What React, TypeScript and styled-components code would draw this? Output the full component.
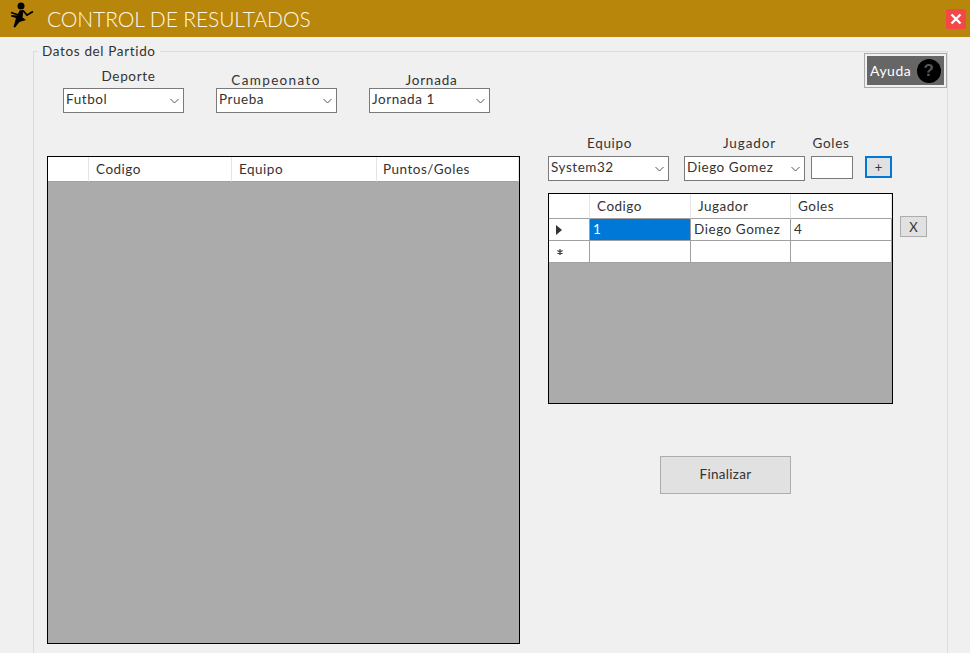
import React from 'react';
import styled, { createGlobalStyle } from 'styled-components';

const Global = createGlobalStyle`
  html, body {
    margin: 0;
    padding: 0;
    background: #f0f0f0;
  }
  body {
    font-family: "Lato", "Noto Sans", sans-serif;
    color: #333;
  }
`;

const Page = styled.div`
  width: 970px;
  height: 653px;
  overflow: hidden;
  background: #f0f0f0;
`;

const TitleBar = styled.header`
  height: 37px;
  background: #b8860b;
  display: flex;
  align-items: center;
  padding: 0 4px 0 9px;
`;

const Logo = styled.svg`
  width: 26px;
  height: 28px;
  margin-top: -9px;
`;

const Title = styled.h1`
  flex: 1;
  margin: 0 0 0 12px;
  color: #fff8e6;
  font-size: 21px;
  font-weight: 300;
  letter-spacing: -0.1px;
`;

const Close = styled.button`
  width: 20px;
  height: 20px;
  padding: 0;
  border: none;
  border-radius: 2px;
  background: #f44747;
  display: flex;
  align-items: center;
  justify-content: center;
  margin-top: 1px;
`;

const Main = styled.main`
  padding: 6px 22px 0 33px;
  position: relative;
`;

const Group = styled.fieldset`
  margin: 0;
  height: 640px;
  padding: 0 14px 0 13px;
  border: 1px solid #dcdcdc;
  box-sizing: border-box;
`;

const GroupTitle = styled.legend`
  margin-left: -9px;
  padding: 0 4px;
  font-size: 13.5px;
  line-height: 16px;
  letter-spacing: 0.65px;
`;

const HelpButton = styled.button`
  position: absolute;
  top: 16px;
  right: 23px;
  width: 83px;
  height: 35px;
  padding: 0 3px 0 5px;
  background: #666;
  border: 1px solid #a9a9a9;
  outline: 2px solid #f0f0f0;
  outline-offset: -3px;
  color: #fff;
  display: flex;
  align-items: center;
  justify-content: space-between;
  font: 400 14px "Lato", sans-serif;
  letter-spacing: 0.5px;
`;

const HelpMark = styled.span`
  width: 24px;
  height: 24px;
  margin-right: 2px;
  border-radius: 50%;
  background: #000;
  color: #555;
  font: 700 17px/24px "Liberation Sans", sans-serif;
  text-align: center;
`;

const Columns = styled.div`
  display: flex;
  align-items: flex-start;
`;

const LeftColumn = styled.section`
  width: 473px;
  flex: none;
`;

const RightColumn = styled.section`
  margin: 76px 0 0 28px;
  width: 380px;
`;

const FilterRow = styled.div`
  display: flex;
  align-items: flex-end;
  gap: 32px;
  padding: 9px 0 0 16px;
  margin-bottom: 43px;
`;

const PlayerRow = styled.div`
  display: flex;
  align-items: flex-end;
  margin-bottom: 12px;
`;

const Field = styled.div<{ $gap?: number; $left?: number }>`
  display: flex;
  flex-direction: column;
  gap: ${(p) => p.$gap ?? 0}px;
  margin-left: ${(p) => p.$left ?? 0}px;
`;

const FieldLabel = styled.label<{ $shift?: number; $spacing?: number }>`
  display: block;
  text-align: center;
  font-size: 13.5px;
  line-height: 16px;
  letter-spacing: ${(p) => p.$spacing ?? 0.65}px;
  padding-left: ${(p) => Math.max(p.$shift ?? 0, 0)}px;
  padding-right: ${(p) => Math.max(-(p.$shift ?? 0), 0)}px;
  white-space: nowrap;
`;

const SelectBox = styled.div`
  width: 121px;
  height: 25px;
  box-sizing: border-box;
  border: 1px solid #7a7a7a;
  background: #fff;
  display: flex;
  align-items: center;
  justify-content: space-between;
  padding: 0 4px 3px 2px;
  font-size: 13.5px;
  letter-spacing: 0.55px;
`;

const TextBox = styled.input`
  width: 42px;
  height: 23px;
  box-sizing: border-box;
  border: 1px solid #7a7a7a;
  background: #fff;
  margin-bottom: 2px;
`;

const SmallButton = styled.button<{ $focused?: boolean }>`
  width: 27px;
  height: ${(p) => (p.$focused ? 22 : 21)}px;
  padding: 0;
  box-sizing: border-box;
  background: #e1e1e1;
  border: ${(p) => (p.$focused ? '2px solid #0078d7' : '1px solid #adadad')};
  font: 400 13px "Lato", sans-serif;
  color: #333;
`;

const AddButton = styled(SmallButton)`
  margin: 0 0 3px 12px;
`;

const GridRow = styled.div`
  display: flex;
  align-items: flex-start;
  gap: 7px;
`;

const RemoveButton = styled(SmallButton)`
  margin-top: 23px;
`;

const Grid = styled.div<{ $width: number; $height: number }>`
  width: ${(p) => p.$width}px;
  height: ${(p) => p.$height}px;
  box-sizing: border-box;
  flex: none;
  border: 1px solid #000;
  background: #ababab;
`;

const GridLine = styled.div<{ $cols: string; $height: number }>`
  display: grid;
  grid-template-columns: ${(p) => p.$cols};
  height: ${(p) => p.$height}px;
  box-sizing: border-box;
`;

const HeadCell = styled.div<{ $pad: number }>`
  background: #fff;
  border-right: 1px solid #e4e4e4;
  border-bottom: 1px solid #a0a0a0;
  padding-left: ${(p) => p.$pad}px;
  font-size: 13.5px;
  line-height: 24px;
  letter-spacing: 0.5px;
  white-space: nowrap;
`;

const Cell = styled.div<{ $selected?: boolean }>`
  background: ${(p) => (p.$selected ? '#0078d7' : '#fff')};
  color: ${(p) => (p.$selected ? '#fff' : '#333')};
  border-right: 1px solid #a0a0a0;
  border-bottom: 1px solid #a0a0a0;
  padding-left: 3px;
  font-size: 13.5px;
  line-height: 21px;
  letter-spacing: 0.55px;
  white-space: nowrap;
  overflow: hidden;
`;

const RowHead = styled(Cell)<{ $inset: number }>`
  display: flex;
  align-items: center;
  padding-left: ${(p) => p.$inset}px;
`;

const FinishRow = styled.div`
  padding: 52px 0 0 112px;
`;

const FinishButton = styled.button`
  width: 131px;
  height: 38px;
  padding-bottom: 3px;
  background: #e1e1e1;
  border: 1px solid #adadad;
  font: 400 13.5px "Lato", sans-serif;
  letter-spacing: 0.3px;
  color: #333;
`;

const Chevron = () => (
  <svg width="9" height="6" viewBox="0 0 9 6" style={{ marginTop: 3 }}>
    <path d="M.5 1l4 4 4-4" fill="none" stroke="#555" strokeWidth="1" />
  </svg>
);

const Select = ({ value }: { value: string }) => (
  <SelectBox>
    <span>{value}</span>
    <Chevron />
  </SelectBox>
);

const resultCols = '41px 143px 145px 1fr';
const scorerCols = '41px 101px 100px 1fr';

export default function App() {
  return (
    <Page>
      <Global />
      <TitleBar>
        <Logo viewBox="0 0 26 28">
          <circle cx="12" cy="6" r="3.5" fill="#000" />
          {/* arms */}
          <path d="M2 12.5l7.5 2.5 2.5-4M14 10.5l4 4.5 6-3.5" fill="none" stroke="#000" strokeWidth="1.8" />
          {/* torso and legs */}
          <path d="M10.5 10.5l4-.5-1 7.5 3.5 2.5-6.5 2-4.5 5.5-1.5-.5 2.5-9-5-1.5.5-1.5 6 .5z" fill="#000" />
        </Logo>
        <Title>CONTROL DE RESULTADOS</Title>
        <Close aria-label="Cerrar">
          <svg width="12" height="12" viewBox="0 0 12 12">
            <path d="M1.5 1.5l9 9M10.5 1.5l-9 9" stroke="#fff" strokeWidth="2.4" />
          </svg>
        </Close>
      </TitleBar>
      <Main>
        <Group>
          <GroupTitle>Datos del Partido</GroupTitle>
          <Columns>
            <LeftColumn>
              <FilterRow>
                <Field $gap={4}>
                  <FieldLabel $shift={10}>Deporte</FieldLabel>
                  <Select value="Futbol" />
                </Field>
                <Field>
                  <FieldLabel $spacing={1.35} $shift={-1}>Campeonato</FieldLabel>
                  <Select value="Prueba" />
                </Field>
                <Field>
                  <FieldLabel $spacing={0.8} $shift={4}>Jornada</FieldLabel>
                  <Select value="Jornada 1" />
                </Field>
              </FilterRow>
              <Grid $width={473} $height={488}>
                <GridLine $cols={resultCols} $height={25}>
                  <HeadCell $pad={0} />
                  <HeadCell $pad={7}>Codigo</HeadCell>
                  <HeadCell $pad={7}>Equipo</HeadCell>
                  <HeadCell $pad={6}>Puntos/Goles</HeadCell>
                </GridLine>
              </Grid>
            </LeftColumn>
            <RightColumn>
              <PlayerRow>
                <Field $gap={5}>
                  <FieldLabel $shift={2}>Equipo</FieldLabel>
                  <Select value="System32" />
                </Field>
                <Field $gap={5} $left={15}>
                  <FieldLabel $shift={10} $spacing={0.9}>Jugador</FieldLabel>
                  <Select value="Diego Gomez" />
                </Field>
                <Field $gap={5} $left={6}>
                  <FieldLabel $shift={-2}>Goles</FieldLabel>
                  <TextBox />
                </Field>
                <AddButton $focused>+</AddButton>
              </PlayerRow>
              <GridRow>
                <Grid $width={345} $height={211}>
                  <GridLine $cols={scorerCols} $height={25}>
                    <HeadCell $pad={0} />
                    <HeadCell $pad={7}>Codigo</HeadCell>
                    <HeadCell $pad={7}>Jugador</HeadCell>
                    <HeadCell $pad={7}>Goles</HeadCell>
                  </GridLine>
                  <GridLine $cols={scorerCols} $height={22}>
                    <RowHead $inset={7}>
                      <svg width="6" height="10" viewBox="0 0 6 10">
                        <path d="M0 0l6 5-6 5z" fill="#333" />
                      </svg>
                    </RowHead>
                    <Cell $selected>1</Cell>
                    <Cell>Diego Gomez</Cell>
                    <Cell>4</Cell>
                  </GridLine>
                  <GridLine $cols={scorerCols} $height={22}>
                    <RowHead $inset={8}>
                      <svg width="6" height="6" viewBox="0 0 6 6">
                        <path d="M3 0v6M.4 1.5l5.2 3M5.6 1.5l-5.2 3" stroke="#444" strokeWidth="1.3" />
                      </svg>
                    </RowHead>
                    <Cell />
                    <Cell />
                    <Cell />
                  </GridLine>
                </Grid>
                <RemoveButton>X</RemoveButton>
              </GridRow>
              <FinishRow>
                <FinishButton>Finalizar</FinishButton>
              </FinishRow>
            </RightColumn>
          </Columns>
        </Group>
        <HelpButton>
          Ayuda
          <HelpMark>?</HelpMark>
        </HelpButton>
      </Main>
    </Page>
  );
}
